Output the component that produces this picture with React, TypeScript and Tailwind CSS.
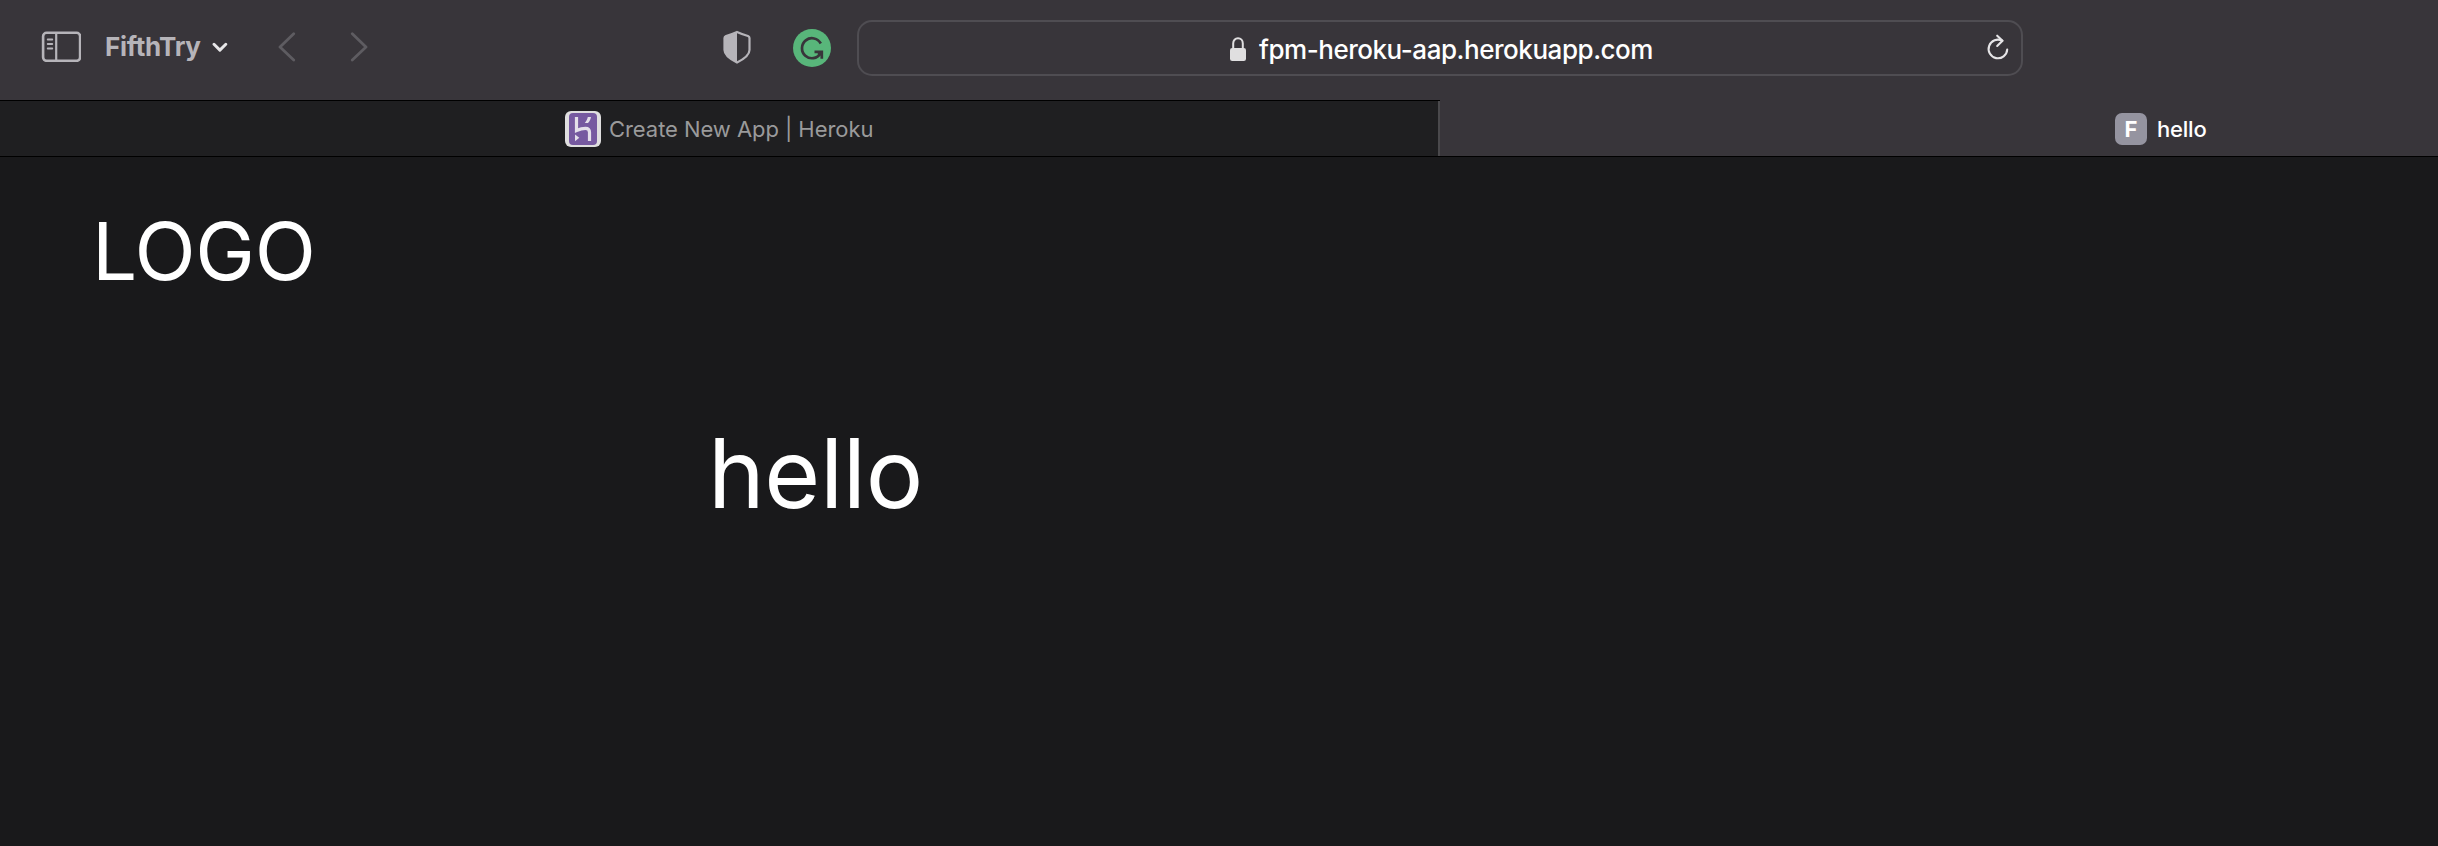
import React from "react";

function SidebarIcon() {
  return (
    <svg className="mb-[2px] ml-[41px] h-[31px] w-[40px] shrink-0" viewBox="0 0 40 31" fill="none" stroke="#b6b4b9">
      <rect x="2.1" y="1.8" width="37" height="28" rx="3.5" strokeWidth="2.6" />
      <path d="M15.2 2v28" strokeWidth="2.2" />
      <path d="M6.7 8.5h4.6M6.7 13h4.6M6.7 17.5h4.6" strokeWidth="1.8" strokeLinecap="round" />
    </svg>
  );
}

function Toolbar() {
  return (
    <header className="flex h-[100px] shrink-0 items-start bg-[#38353a]">
      <div className="flex h-[94px] w-[857px] shrink-0 items-center">
        <SidebarIcon />
        <span className="ml-[24px] w-[97px] whitespace-nowrap text-[26px] leading-[30px] font-bold tracking-[-0.3px] text-[#b6b4b9]">
          FifthTry
        </span>
        <svg className="ml-[10px] h-[12px] w-[16px] shrink-0" viewBox="0 0 16 12" fill="none" stroke="#e8e7e9" strokeWidth="2.9" strokeLinecap="round" strokeLinejoin="round">
          <path d="M2 3.2l5.9 5.9L13.8 3.2" />
        </svg>
        <svg className="ml-[50px] h-[30px] w-[18px] shrink-0" viewBox="0 0 18 30" fill="none" stroke="#5e5c61" strokeWidth="2.8" strokeLinecap="round" strokeLinejoin="round">
          <path d="M15.7 1.7L2 15l13.7 13" />
        </svg>
        <svg className="ml-[54px] h-[30px] w-[18px] shrink-0" viewBox="0 0 18 30" fill="none" stroke="#5e5c61" strokeWidth="2.8" strokeLinecap="round" strokeLinejoin="round">
          <path d="M2.3 1.7L16 15 2.3 28" />
        </svg>
        <svg className="ml-[355px] h-[34px] w-[28px] shrink-0" viewBox="0 0 28 34" fill="none">
          <path d="M14 2c3.5 1.6 7.5 3 11 4 1 .4 1.5 1 1.5 2v12c0 5-5 8.8-12.5 12.5C6.5 28.8 1.5 25 1.5 20V8c0-1 .5-1.6 1.5-2 3.5-1 7.5-2.400 11-4z" stroke="#b6b4b9" strokeWidth="2.2" />
          <path d="M14 2v30.500C6.500 28.800 1.500 25 1.500 20V8c0-1 .5-1.600 1.500-2C6.500 5 10.500 3.600 14 2z" fill="#b6b4b9" />
        </svg>
        <svg className="ml-[42px] mt-[2px] h-[38px] w-[38px] shrink-0" viewBox="0 0 38 38" fill="none">
          <circle cx="19" cy="19" r="19" fill="#58b67a" />
          <path d="M27.8 14.5A10 10 0 1 0 27.5 24.5" stroke="#38353a" strokeWidth="2.7" />
          <path d="M21.5 22.8h7.3v7M28.5 22.5l-3 3.5" stroke="#38353a" strokeWidth="2.7" />
        </svg>
      </div>
      <div className="mt-[20px] flex h-[56px] w-[1166px] shrink-0 items-center rounded-[15px] border-2 border-[#4f4d52]">
        <svg className="mt-[2px] ml-[370px] h-[24px] w-[18px] shrink-0" viewBox="0 0 18 24" fill="none">
          <path d="M4.2 12V6.5C4.2 3.5 6.2 1.3 9 1.3s4.8 2.2 4.8 5.2V12" stroke="#e0dfe0" strokeWidth="2" />
          <rect x="1" y="11" width="16" height="13" rx="2.2" fill="#e0dfe0" />
        </svg>
        <span className="ml-[12px] mt-[4px] w-[401px] whitespace-nowrap text-[26px] leading-[32px] font-medium tracking-[-0.46px] text-white">
          fpm-heroku-aap.herokuapp.com
        </span>
        <svg className="ml-[326px] h-[28px] w-[24px] shrink-0" viewBox="0 0 24 28" fill="none" stroke="#e6e5e7" strokeWidth="2.1" strokeLinecap="round" strokeLinejoin="round">
          <path d="M21.2 15.500A9.300 9.300 0 1 1 16.300 6.800" />
          <path d="M11.200 1.700l5.300 5-5.300 5.300" />
        </svg>
      </div>
    </header>
  );
}

function HerokuIcon() {
  return (
    <svg className="h-[36px] w-[36px] shrink-0" viewBox="0 0 36 36" fill="none">
      <rect width="36" height="36" rx="6" fill="#dfdedf" />
      <rect x="4" y="2" width="28" height="32" rx="4" fill="#7659a0" />
      <path d="M11.5 6v13.500c3-1.300 6.500-2.200 9-2.200 3.300 0 4 1.700 4 4V30" stroke="#e4dfea" strokeWidth="3.2" />
      <path d="M10 23.500l4.300 3.300-4.300 3.400z" fill="#e4dfea" />
      <path d="M22.800 6H26c-.4 2.400-1.400 4.300-3 6h-3.200c1.600-1.900 2.600-3.800 3-6z" fill="#e4dfea" />
    </svg>
  );
}

function TabBar() {
  return (
    <nav className="flex h-[57px] shrink-0 border-b border-black bg-[#38353a]">
      <div className="flex w-[1440px] shrink-0 border-t border-black bg-[#1f1f21]">
        <div className="flex flex-1 items-center border-r-2 border-[#4a494c] pl-[565px]">
          <HerokuIcon />
          <span className="ml-[8px] whitespace-nowrap text-[22px] leading-[28px] tracking-[-0.06px] text-[#9a9a9b]">
            Create New App | Heroku
          </span>
        </div>
      </div>
      <div className="flex flex-1 items-center pl-[675px] pt-[2px]">
        <span className="flex h-[32px] w-[32px] items-center justify-center rounded-[7px] bg-[#9594a0] text-[22px] leading-[32px] font-bold text-white">
          F
        </span>
        <span className="ml-[10px] text-[22px] leading-[28px] font-medium tracking-[-0.2px] text-white">hello</span>
      </div>
    </nav>
  );
}

export default function App() {
  return (
    <div className="flex h-[846px] w-[2438px] flex-col overflow-hidden bg-[#19191b] font-['Inter',sans-serif]">
      <Toolbar />
      <TabBar />
      <main className="flex flex-col items-start text-white">
        <div className="mt-[46px] ml-[92px] text-[80px] leading-[96px] tracking-[-0.4px]">LOGO</div>
        <h1 className="mt-[116px] ml-[708px] text-[96px] leading-[116px] font-normal tracking-[-0.4px]">hello</h1>
      </main>
    </div>
  );
}
